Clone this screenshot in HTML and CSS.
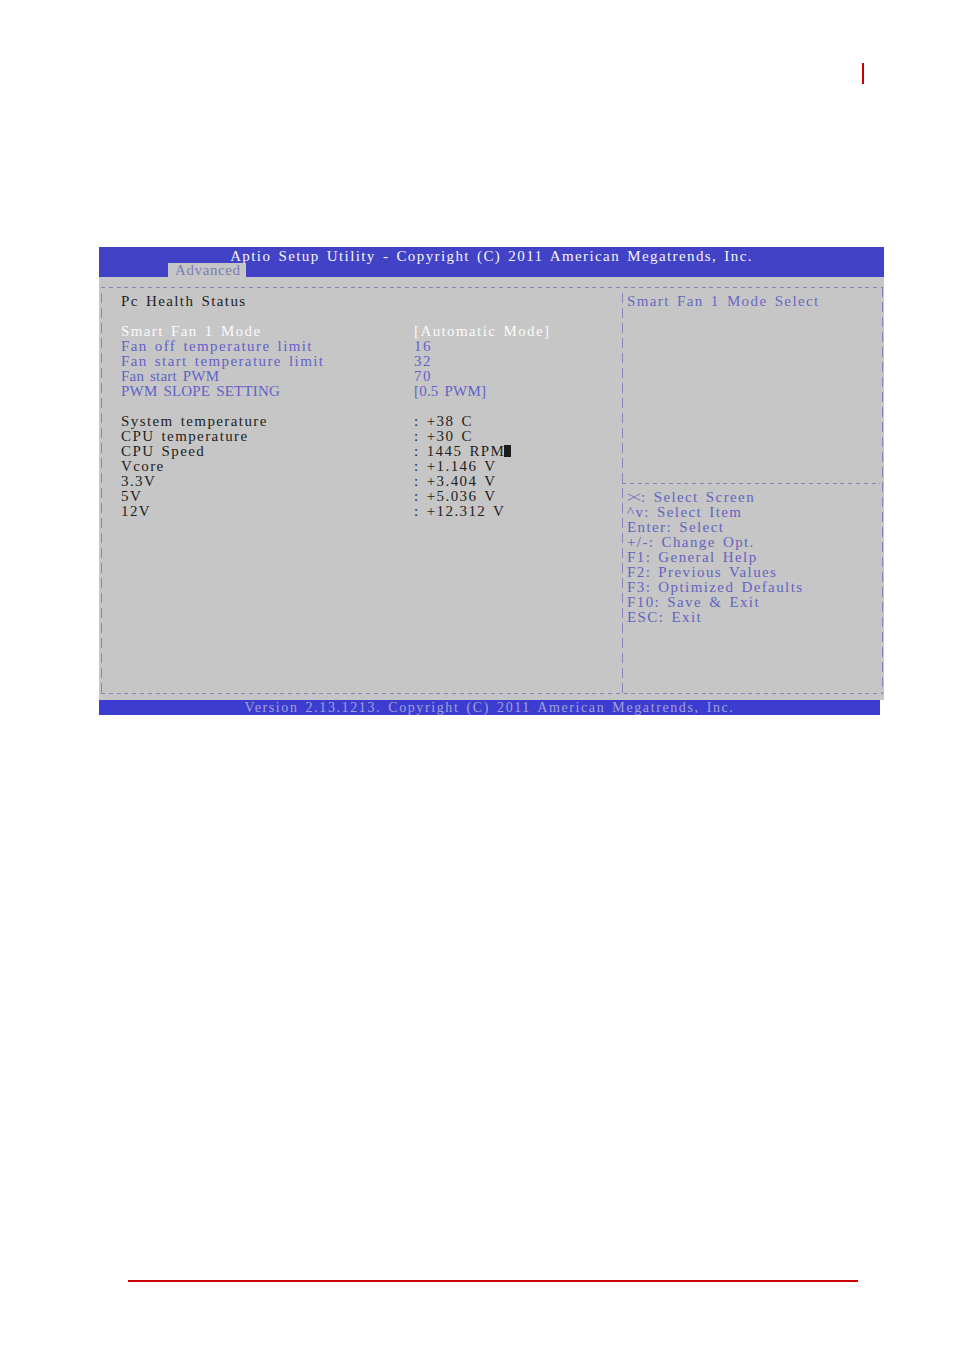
FILE: index.html
```html
<!DOCTYPE html>
<html>
<head>
<meta charset="utf-8">
<link rel="stylesheet" href="styles.css">
</head>
<body>
<div class="page">
  <div class="top-mark"></div>
  <div class="bios">
    <div class="titlebar">
      <div class="title">Aptio Setup Utility - Copyright (C) 2011 American Megatrends, Inc.</div>
      <div class="tabs"><span class="tab">Advanced</span></div>
    </div>
    <div class="screen">
      <div class="frame">
        <div class="left">
          <div class="line heading">Pc Health Status</div>
          <div class="line"></div>
          <div class="grid">
            <div class="sel">Smart Fan 1 Mode</div><div class="sel">[Automatic Mode]</div>
            <div class="opt">Fan off temperature limit</div><div class="opt">16</div>
            <div class="opt">Fan start temperature limit</div><div class="opt">32</div>
            <div class="opt caps">Fan start PWM</div><div class="opt">70</div>
            <div class="opt caps">PWM SLOPE SETTING</div><div class="opt caps">[0.5 PWM]</div>
            <div class="blank"></div><div class="blank"></div>
            <div class="info">System temperature</div><div class="info">: +38 C</div>
            <div class="info">CPU temperature</div><div class="info">: +30 C</div>
            <div class="info">CPU Speed</div><div class="info">: 1445 RPM<span class="cursor"></span></div>
            <div class="info">Vcore</div><div class="info">: +1.146 V</div>
            <div class="info">3.3V</div><div class="info">: +3.404 V</div>
            <div class="info">5V</div><div class="info">: +5.036 V</div>
            <div class="info">12V</div><div class="info">: +12.312 V</div>
          </div>
        </div>
        <div class="right">
          <div class="desc">Smart Fan 1 Mode Select</div>
          <div class="help">
            <div class="hl"><span class="arrows">&gt;&lt;</span>: Select Screen</div>
            <div class="hl">^v: Select Item</div>
            <div class="hl">Enter: Select</div>
            <div class="hl">+/-: Change Opt.</div>
            <div class="hl">F1: General Help</div>
            <div class="hl">F2: Previous Values</div>
            <div class="hl">F3: Optimized Defaults</div>
            <div class="hl">F10: Save &amp; Exit</div>
            <div class="hl">ESC: Exit</div>
          </div>
        </div>
      </div>
    </div>
    <div class="footer">Version 2.13.1213. Copyright (C) 2011 American Megatrends, Inc.</div>
  </div>
  <div class="bottom-rule"></div>
</div>
</body>
</html>
```
FILE: styles.css
```css
* { box-sizing: border-box; }
html, body { margin: 0; padding: 0; background: #ffffff; }
.page { width: 954px; height: 1352px; position: relative; }

.top-mark {
  width: 2px;
  height: 21px;
  margin: 63px 0 0 862px;
  background: #cc0000;
}

.bios {
  width: 785px;
  margin: 163px 0 0 99px;
  font-family: "Liberation Serif", "Times New Roman", serif;
  font-size: 15px;
  letter-spacing: 1.4px;
  word-spacing: 2px;
}

.titlebar {
  height: 30px;
  background: #4242c6;
}
.title {
  height: 16px;
  line-height: 18px;
  text-align: center;
  color: #f4f4f8;
  white-space: nowrap;
}
.tabs { height: 14px; display: flex; padding-left: 69px; }
.tab {
  width: 78px;
  height: 14px;
  line-height: 15px;
  background: #c6c6c6;
  color: #7c7cb8;
  padding-left: 7px;
  letter-spacing: 0.6px;
  white-space: nowrap;
}

.screen {
  height: 423px;
  background: #c6c6c6;
  padding: 10px 0 0 2px;
}
.frame {
  width: 782px;
  height: 407px;
  display: flex;
  background-image:
    repeating-linear-gradient(to right, #8686bc 0 4px, transparent 4px 7.8px),
    repeating-linear-gradient(to right, #8686bc 0 4px, transparent 4px 7.8px),
    repeating-linear-gradient(to bottom, #8686bc 0 10px, transparent 10px 15px);
  background-size: 100% 1px, 100% 1px, 1px 100%;
  background-position: 0 0, 0 100%, 100% 0;
  background-repeat: no-repeat;
}
.left {
  width: 521px;
  padding: 7px 0 0 20px;
  background-image: repeating-linear-gradient(to bottom, #8686bc 0 10px, transparent 10px 15px);
  background-size: 1px 100%;
  background-repeat: no-repeat;
  background-position: 0 6px;
}
.line { height: 15px; line-height: 15px; white-space: nowrap; }
.heading { color: #1e1e1e; }
.grid {
  display: grid;
  grid-template-columns: 293px 1fr;
  grid-auto-rows: 15px;
  line-height: 15px;
  white-space: nowrap;
}
.sel { color: #fafafa; }
.opt { color: #6262c8; }
.caps { letter-spacing: 0.2px; }
.info { color: #1e1e1e; }
.cursor {
  display: inline-block;
  width: 7px;
  height: 12px;
  background: #1c1c1c;
  vertical-align: -1px;
  margin-left: -1px;
}

.right {
  flex: 1;
  padding: 0 3px 0 0;
  background-image: repeating-linear-gradient(to bottom, #8686bc 0 10px, transparent 10px 15px);
  background-size: 1px 100%;
  background-repeat: no-repeat;
  background-position: 0 6px;
}
.desc {
  height: 196px;
  padding: 7px 0 0 5px;
  line-height: 15px;
  color: #6868c4;
  white-space: nowrap;
}
.help {
  padding: 7px 0 0 5px;
  background-image: repeating-linear-gradient(to right, #8686bc 0 4px, transparent 4px 7.8px);
  background-size: 100% 1px;
  background-repeat: no-repeat;
  background-position: 0 0;
}
.hl {
  height: 15px;
  line-height: 15px;
  color: #6464c0;
  white-space: nowrap;
}
.arrows { letter-spacing: -3px; margin-right: 3px; }

.footer {
  width: 781px;
  height: 15px;
  background: #3c3cd0;
  color: #a2a2d8;
  text-align: center;
  line-height: 16px;
  font-size: 14px;
  letter-spacing: 1.6px;
  white-space: nowrap;
}

.bottom-rule {
  width: 730px;
  height: 2px;
  margin: 565px 0 0 128px;
  background: #cc0000;
}
```
